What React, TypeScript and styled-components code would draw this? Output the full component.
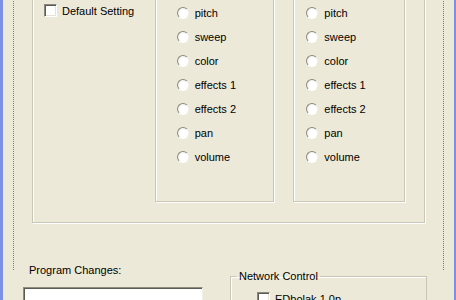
import styled, { createGlobalStyle } from "styled-components";

const Global = createGlobalStyle`
  html, body {
    margin: 0;
    background: #ece9d8;
  }
  body {
    font-family: "Liberation Sans", Arial, sans-serif;
    font-size: 11px;
    color: #000;
  }
`;

const Frame = styled.div`
  width: 456px;
  height: 300px;
  box-sizing: border-box;
  overflow: hidden;
  border-left: 3px solid #7b8fe3;
  border-right: 2px solid #7b8fe3;
  padding: 0 10px;
  background: #ece9d8;
`;

const Focus = styled.div`
  height: 100%;
  border-left: 1px dotted #6f6fd6;
  border-right: 1px dotted #6f6fd6;
`;

const Group = styled.div`
  box-sizing: border-box;
  border: 1px solid #c9c6b5;
  box-shadow: inset 1px 1px 0 #fff, 1px 1px 0 #fff;
`;

const Settings = styled(Group)`
  width: 393px;
  margin: -30px 0 0 18px;
  padding: 19px 19px 20px 11px;
  display: flex;
  align-items: flex-start;
`;

const LeftCol = styled.div`
  width: 111px;
  padding-top: 14px;
`;

const RadioGroup = styled(Group)<{ $w: number; $pad: number; $gap?: number }>`
  width: ${(p) => p.$w}px;
  height: 212px;
  margin-left: ${(p) => p.$gap ?? 0}px;
  padding: 10px 0 0 ${(p) => p.$pad}px;
`;

const Option = styled.label`
  height: 24px;
  display: flex;
  align-items: center;
  gap: 6px;
`;

const Radio = styled.span`
  width: 12px;
  height: 12px;
  box-sizing: border-box;
  border-radius: 50%;
  border: 1px solid;
  border-color: #8c8a80 #f4f3ee #fff #8c8a80;
  background: radial-gradient(circle at 60% 60%, #fff 45%, #e4e2d8 100%);
`;

const CheckRow = styled.label<{ $left?: number }>`
  display: flex;
  align-items: center;
  gap: 5px;
  margin-left: ${(p) => p.$left ?? 0}px;
`;

const Check = styled.span`
  width: 13px;
  height: 13px;
  box-sizing: border-box;
  border: 1px solid;
  border-color: #8a887e #fff #fff #8a887e;
  box-shadow: inset 1px 1px 0 #5c5b55, inset -1px -1px 0 #e6e3d6;
  background: #fff;
`;

const Bottom = styled.div`
  display: flex;
  align-items: flex-start;
  margin-left: 9px;
`;

const ProgramCol = styled.div`
  width: 180px;
  padding-top: 41px;
`;

const FieldLabel = styled.div`
  line-height: 13px;
  padding-left: 6px;
  margin-bottom: 10px;
`;

const TextBox = styled.div`
  height: 24px;
  box-sizing: border-box;
  background: #fff;
  border: 1px solid;
  border-color: #8f8c80 #f2f1ea #f2f1ea #8f8c80;
  box-shadow: inset 1px 1px 0 #5c5b55;
`;

const Network = styled.fieldset`
  width: 197px;
  height: 60px;
  box-sizing: border-box;
  margin: 47px 0 0 27px;
  padding: 0 0 0 6px;
  border: 1px solid #c9c6b5;
  box-shadow: inset 1px 1px 0 #fff;
`;

const Legend = styled.legend`
  padding: 0 2px;
  line-height: 13px;
`;

const NetCheck = styled(CheckRow)`
  margin-top: 9px;
`;

const left = ["pitch", "sweep", "color", "effects 1", "effects 2", "pan", "volume"];

export default function App() {
  return (
    <Frame>
      <Global />
      <Focus>
        <Settings>
          <LeftCol>
            <CheckRow>
              <Check />
              Default Setting
            </CheckRow>
          </LeftCol>
          <RadioGroup $w={120} $pad={21}>
            {left.map((o) => (
              <Option key={o}>
                <Radio />
                {o}
              </Option>
            ))}
          </RadioGroup>
          <RadioGroup $w={112} $pad={12} $gap={19}>
            {left.map((o) => (
              <Option key={o}>
                <Radio />
                {o}
              </Option>
            ))}
          </RadioGroup>
        </Settings>
        <Bottom>
          <ProgramCol>
            <FieldLabel>Program Changes:</FieldLabel>
            <TextBox />
          </ProgramCol>
          <Network>
            <Legend>Network Control</Legend>
            <NetCheck $left={20}>
              <Check />
              EDbolak 1.0p
            </NetCheck>
          </Network>
        </Bottom>
      </Focus>
    </Frame>
  );
}
